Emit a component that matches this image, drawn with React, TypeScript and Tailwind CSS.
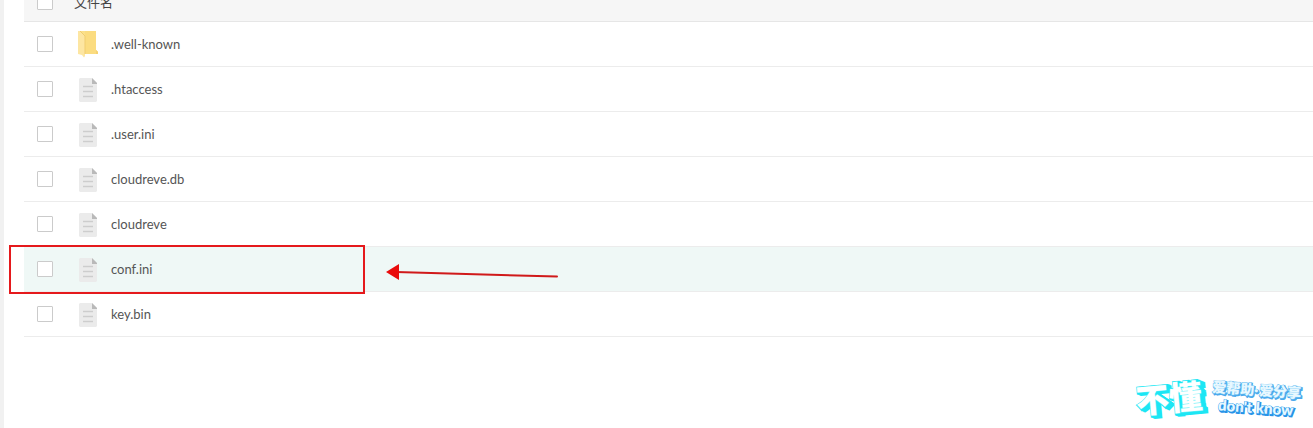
import React from 'react';

interface FileEntry {
  name: string;
  type: 'folder' | 'file';
  active?: boolean;
}

const files: FileEntry[] = [
  { name: '.well-known', type: 'folder' },
  { name: '.htaccess', type: 'file' },
  { name: '.user.ini', type: 'file' },
  { name: 'cloudreve.db', type: 'file' },
  { name: 'cloudreve', type: 'file' },
  { name: 'conf.ini', type: 'file', active: true },
  { name: 'key.bin', type: 'file' },
];

function FolderIcon() {
  return (
    <svg className="block h-7 w-5" viewBox="0 0 20 28" aria-hidden="true">
      <path d="M2 1h16v19l2 2v2H5z" fill="#fbe08a" />
      <path d="M7 1h11v19l2 2v2H7z" fill="#fbdc80" />
      <path d="M18 20l2 2v2h-2z" fill="#f5d272" />
      <path d="M0 1h2l5 5v20l-1 1.5L4 25l-4-1z" fill="#fde6a2" />
      <path d="M2 1l5 5v18" fill="none" stroke="#f0cd70" />
    </svg>
  );
}

function FileIcon() {
  return (
    <svg className="block h-6 w-[18px]" viewBox="0 0 18 24" aria-hidden="true">
      <path d="M1 0h12l5 5v18l-1 1H1l-1-1V1z" fill="#ebebeb" />
      <path d="M13 0l5 5v1h-5z" fill="#b9b9b9" />
      <path d="M4 8.5h10M4 13.5h10M4 18.5h10" stroke="#cdcdcd" strokeWidth="1.4" />
    </svg>
  );
}

function Checkbox({ label }: { label: string }) {
  return (
    <input
      type="checkbox"
      aria-label={label}
      className="block size-4 appearance-none rounded-[1px] border border-[#cbcbcb] bg-white checked:bg-emerald-500"
    />
  );
}

function FileRow({ file }: { file: FileEntry }) {
  return (
    <tr className={file.active ? 'bg-[#eff8f6]' : 'bg-white'}>
      <td className="h-[45px] w-[50px] border-b border-[#ececec] p-0 pl-[13px]">
        <Checkbox label={file.name} />
      </td>
      <td className="h-[45px] border-b border-[#ececec] p-0">
        <div className="flex items-center">
          <span className="flex w-[37px] pl-1">
            {file.type === 'folder' ? <FolderIcon /> : <span className="pt-px pl-px"><FileIcon /></span>}
          </span>
          <span className="font-['Lato',sans-serif] leading-5">{file.name}</span>
        </div>
      </td>
    </tr>
  );
}

function Highlight() {
  return (
    <>
      <div className="pointer-events-none absolute top-[245px] left-[9px] h-[49px] w-[356px] border-2 border-[#e5191c]" />
      <svg
        className="pointer-events-none absolute top-[262px] left-[386px] h-5 w-[174px]"
        viewBox="0 0 174 20"
        aria-hidden="true"
      >
        <path d="M10 10L171 14.5" stroke="#d01a1a" strokeWidth="2" strokeLinecap="round" />
        <path d="M0 10L13 2v16z" fill="#e90c0c" />
      </svg>
    </>
  );
}

const depth = [4, 3, 2, 1];

function Logo() {
  return (
    <svg
      className="absolute right-0 bottom-0 h-[60px] w-[185px] font-['Noto_Sans_CJK_SC',sans-serif] font-black"
      viewBox="0 0 185 60"
      role="img"
      aria-label="不懂 爱帮助·爱分享 don't know"
    >
      <g transform="rotate(-5 40 32)" fontSize="33">
        {depth.map(d => (
          <text key={d} x={8 + d} y={43 + d / 2} fill="#1ce6f4" stroke="#1ce6f4" strokeWidth="3">不懂</text>
        ))}
        <text x="8" y="43" fill="#ffffff" stroke="#5ff0f8" strokeWidth="1" paintOrder="stroke">不懂</text>
      </g>
      <g transform="rotate(4 85 24)">
        <g fontSize="14" fill="#4ba9ec" stroke="#4ba9ec" strokeWidth="2">
          <text x="85" y="25">爱帮助</text>
          <text x="127" y="25" className="font-['Lato',sans-serif]">·</text>
          <text x="132" y="25">爱分享</text>
        </g>
        <g fontSize="14" fill="#e8f8ff" stroke="#73c6f5" strokeWidth="1" paintOrder="stroke">
          <text x="84" y="24">爱帮助</text>
          <text x="126" y="24" className="font-['Lato',sans-serif]">·</text>
          <text x="131" y="24">爱分享</text>
        </g>
        <g fontSize="15" className="font-['Lato',sans-serif]">
          <text x="92" y="43" fill="#2792e7" stroke="#2792e7" strokeWidth="2">don't know</text>
          <text x="91" y="42" fill="#e8f8ff" stroke="#46adf0" strokeWidth="1" paintOrder="stroke">don't know</text>
        </g>
      </g>
    </svg>
  );
}

export default function App() {
  return (
    <main className="relative min-h-screen overflow-hidden border-l-4 border-[#f1f1f1] bg-white pl-5 font-['Noto_Sans_CJK_SC',sans-serif] text-[13px] text-[#555]">
      {/* the list is scrolled a little, so the header row is cut at the top */}
      <table className="-mt-[18px] w-full border-separate border-spacing-0">
        <thead>
          <tr className="bg-[#f6f6f6]">
            <th className="h-10 w-[50px] border-b border-[#e6e6e6] p-0 pl-[13px]">
              <Checkbox label="全选" />
            </th>
            <th className="h-10 border-b border-[#e6e6e6] p-0 text-left font-normal text-[#444]">文件名</th>
          </tr>
        </thead>
        <tbody>
          {files.map(file => (
            <FileRow key={file.name} file={file} />
          ))}
        </tbody>
      </table>
      <div className="absolute inset-y-0 -left-1">
        <Highlight />
      </div>
      <Logo />
    </main>
  );
}
